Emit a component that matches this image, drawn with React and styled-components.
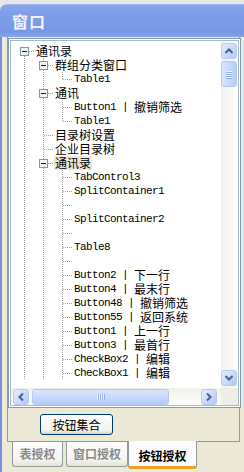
import React from 'react'
import styled, { createGlobalStyle } from 'styled-components'

const GlobalStyle = createGlobalStyle`
  html, body { margin: 0; padding: 0; }
  body {
    width: 244px;
    height: 472px;
    overflow: hidden;
    background: #e6e6e6;
    font-family: "Noto Sans CJK SC", sans-serif;
  }
`

const Window = styled.div`
  margin-top: 4px;
  width: 250px;
  height: 468px;
  display: flex;
  flex-direction: column;
`
const TitleBar = styled.div`
  height: 33px;
  flex: none;
  border-top-left-radius: 7px;
  background: linear-gradient(#a3baf2 0, #86a3ea 2px, #7d9ce8 40%, #7797e5 85%, #8aa6ec 100%);
  box-sizing: border-box;
  padding: 2px 0 0 12px;
  color: #eef2fd;
  font-size: 16px;
  font-weight: 700;
  line-height: 31px;
  letter-spacing: 1px;
`
const Client = styled.div`
  flex: 1;
  display: flex;
  flex-direction: column;
  background: #ece9d8;
  border-left: 2px solid #7a8fdc;
  padding-left: 5px;
`
const TabPage = styled.div`
  width: 233px;
  height: 405px;
  box-sizing: border-box;
  border: 1px solid #919b9c;
  border-top: none;
  background: #ece9d8;
  display: flex;
  flex-direction: column;
`
const TreeFrame = styled.div`
  margin-top: 1px;
  width: 233px;
  height: 370px;
  box-sizing: border-box;
  border: 1px solid #7f9db9;
  padding: 1px;
  background: #fff;
`
const TreeInner = styled.div`
  height: 100%;
  box-sizing: border-box;
  border: 1px solid #a9b9cc;
  display: grid;
  grid-template-columns: 1fr 17px;
  grid-template-rows: 1fr 17px;
`
const Tree = styled.div`
  overflow: hidden;
  background: #fff;
  padding: 3px 0 0 4px;
`
const Row = styled.div`
  display: flex;
  align-items: flex-start;
  height: 14px;
  white-space: nowrap;
`
const Cell = styled.svg`
  flex: none;
  display: block;
  shape-rendering: crispEdges;
`
const Dots = styled.line`
  stroke: #a3a29a;
  stroke-width: 1;
  stroke-dasharray: 1 1;
`
const BoxRect = styled.rect`
  fill: #f2f4f7;
  stroke: #7b98b8;
  stroke-width: 1;
`
const Minus = styled.line`
  stroke: #1a1a1a;
  stroke-width: 1;
`
const Label = styled.div`
  display: flex;
  align-items: flex-start;
  height: 14px;
  margin-left: 1px;
  padding: 0 1px;
  color: #000;
  background: ${p => (p.$sel ? '#ebe8d8' : 'transparent')};
`
const Mono = styled.span`
  display: inline-block;
  height: 14px;
  line-height: 14px;
  font-family: "Liberation Mono", monospace;
  font-size: 11px;
  letter-spacing: -0.6px;
  white-space: pre;
`
const Han = styled.span`
  display: inline-block;
  height: 14px;
  line-height: 13px;
  font-family: "Noto Sans CJK SC", sans-serif;
  font-size: 12px;
`

const VScroll = styled.div`
  display: flex;
  flex-direction: column;
  background: linear-gradient(90deg, #f3f1ea, #fdfdfb);
  padding: 2px 0 2px 0;
`
const HScroll = styled.div`
  display: flex;
  align-items: center;
  background: linear-gradient(#f3f1ea, #fdfdfb);
  padding: 0 4px 0 2px;
`
const Corner = styled.div`
  background: #efede5;
`
const ArrowBtn = styled.div`
  flex: none;
  width: 16px;
  height: 16px;
  box-sizing: border-box;
  border: 1px solid #b7cbf6;
  border-radius: 3px;
  background: linear-gradient(135deg, #e6eefe 0%, #c9d8fc 55%, #b3c8f7 100%);
  display: flex;
  align-items: center;
  justify-content: center;
`
const Thumb = styled.div`
  flex: none;
  box-sizing: border-box;
  border: 1px solid #b3c8f6;
  border-radius: 3px;
  background: ${p => (p.$horiz
    ? 'linear-gradient(#dbe6fe, #c5d6fc 60%, #b6cbf8)'
    : 'linear-gradient(90deg, #dbe6fe, #c5d6fc 60%, #b6cbf8)')};
  display: flex;
  flex-direction: ${p => (p.$horiz ? 'row' : 'column')};
  align-items: center;
  justify-content: center;
  gap: 1px;
  width: ${p => (p.$horiz ? '137px' : '16px')};
  height: ${p => (p.$horiz ? '16px' : '26px')};
  margin: ${p => (p.$horiz ? '0 0 0 3px' : '2px 0 0 0')};
`
const Grip = styled.div`
  width: ${p => (p.$horiz ? '1px' : '6px')};
  height: ${p => (p.$horiz ? '6px' : '1px')};
  background: #eef3fe;
  box-shadow: ${p => (p.$horiz ? '1px 0 0 #8eaef2' : '0 1px 0 #8eaef2')};
`
const Spacer = styled.div`
  flex: 1;
`
const Chevron = styled.svg`
  display: block;
  fill: none;
  stroke: #4d6185;
  stroke-width: 2;
`

const Bottom = styled.div`
  padding: 6px 0 0 32px;
`
const Button = styled.div`
  width: 73px;
  height: 21px;
  box-sizing: border-box;
  border: 1px solid #003c74;
  border-radius: 3px;
  background: linear-gradient(#fefefe, #f4f3ee 80%, #d8d2c6);
  font-size: 12px;
  line-height: 19px;
  text-align: center;
  color: #000;
`

const TabStrip = styled.div`
  display: flex;
  align-items: flex-start;
  padding-left: 5px;
`
const Tab = styled.div`
  position: relative;
  z-index: ${p => (p.$active ? 1 : 0)};
  width: ${p => p.$w}px;
  height: ${p => (p.$active ? 28 : 25)}px;
  margin-top: ${p => (p.$active ? -1 : 0)}px;
  margin-right: ${p => p.$mr || 0}px;
  box-sizing: border-box;
  border: 1px solid #919b9c;
  border-top: none;
  border-bottom: ${p => (p.$active ? '3px solid #efa023' : '1px solid #919b9c')};
  border-radius: 0 0 3px 3px;
  background: ${p => (p.$active ? '#fcfcfe' : 'linear-gradient(#fefefe, #f4f3ee 75%, #e4e1d6)')};
  color: ${p => (p.$active ? '#000' : '#8a8a8a')};
  font-size: 12px;
  font-weight: 700;
  text-align: center;
  line-height: 24px;
  padding-top: ${p => (p.$active ? 3 : 0)}px;
`

const rows = [
  { level: 0, box: true, first: true, zh: '通讯录' },
  { level: 1, box: true, zh: '群组分类窗口' },
  { level: 2, en: 'Table1', last: true },
  { level: 1, box: true, zh: '通讯' },
  { level: 2, en: 'Button1', zh: '撤销筛选' },
  { level: 2, en: 'Table1', last: true },
  { level: 1, zh: '目录树设置' },
  { level: 1, zh: '企业目录树' },
  { level: 1, box: true, zh: '通讯录', sel: true },
  { level: 2, en: 'TabControl3' },
  { level: 2, en: 'SplitContainer1' },
  { level: 2 },
  { level: 2, en: 'SplitContainer2' },
  { level: 2 },
  { level: 2, en: 'Table8' },
  { level: 2 },
  { level: 2, en: 'Button2', zh: '下一行' },
  { level: 2, en: 'Button4', zh: '最末行' },
  { level: 2, en: 'Button48', zh: '撤销筛选' },
  { level: 2, en: 'Button55', zh: '返回系统' },
  { level: 2, en: 'Button1', zh: '上一行' },
  { level: 2, en: 'Button3', zh: '最首行' },
  { level: 2, en: 'CheckBox2', zh: '编辑' },
  { level: 2, en: 'CheckBox1', zh: '编辑' },
]

const Guide = () => (
  <Cell width="19" height="14">
    <Dots x1="9.5" y1="0" x2="9.5" y2="14" />
  </Cell>
)

const Connector = ({ box, first, last }) => (
  <Cell width="19" height="14">
    {!first && <Dots x1="9.5" y1="0" x2="9.5" y2="8" />}
    {!last && <Dots x1="9.5" y1="8" x2="9.5" y2="14" />}
    <Dots x1={box ? 14 : 10} y1="7.5" x2="19" y2="7.5" />
    {box && (
      <>
        <BoxRect x="5.5" y="3.5" width="8" height="8" />
        <Minus x1="7" y1="7.5" x2="12" y2="7.5" />
      </>
    )}
  </Cell>
)

const TreeRow = ({ level, box, first, last, sel, en, zh }) => (
  <Row>
    {Array.from({ length: level }).map((_, i) => <Guide key={i} />)}
    <Connector box={box} first={first} last={last} />
    {(en || zh) && (
      <Label $sel={sel}>
        {en && <Mono>{en}{zh ? ' | ' : ''}</Mono>}
        {zh && <Han>{zh}</Han>}
      </Label>
    )}
  </Row>
)

const Up = () => (
  <Chevron width="10" height="8" viewBox="0 0 10 8"><polyline points="1.5,6 5,2.5 8.5,6" /></Chevron>
)
const Down = () => (
  <Chevron width="10" height="8" viewBox="0 0 10 8"><polyline points="1.5,2 5,5.5 8.5,2" /></Chevron>
)
const Left = () => (
  <Chevron width="8" height="10" viewBox="0 0 8 10"><polyline points="6,1.5 2.5,5 6,8.5" /></Chevron>
)
const Right = () => (
  <Chevron width="8" height="10" viewBox="0 0 8 10"><polyline points="2,1.5 5.5,5 2,8.5" /></Chevron>
)

const App = () => {
  return (
    <>
      <GlobalStyle />
      <Window>
        <TitleBar>窗口</TitleBar>
        <Client>
          <TabPage>
            <TreeFrame>
              <TreeInner>
                <Tree>
                  {rows.map((r, i) => <TreeRow key={i} {...r} />)}
                </Tree>
                <VScroll>
                  <ArrowBtn><Up /></ArrowBtn>
                  <Thumb>
                    <Grip /><Grip /><Grip /><Grip />
                  </Thumb>
                  <Spacer />
                  <ArrowBtn><Down /></ArrowBtn>
                </VScroll>
                <HScroll>
                  <ArrowBtn><Left /></ArrowBtn>
                  <Thumb $horiz>
                    <Grip $horiz /><Grip $horiz /><Grip $horiz /><Grip $horiz />
                  </Thumb>
                  <Spacer />
                  <ArrowBtn><Right /></ArrowBtn>
                </HScroll>
                <Corner />
              </TreeInner>
            </TreeFrame>
            <Bottom>
              <Button>按钮集合</Button>
            </Bottom>
          </TabPage>
          <TabStrip>
            <Tab $w={51} $mr={3}>表授权</Tab>
            <Tab $w={62}>窗口授权</Tab>
            <Tab $w={69} $active>按钮授权</Tab>
          </TabStrip>
        </Client>
      </Window>
    </>
  )
}

export default App
